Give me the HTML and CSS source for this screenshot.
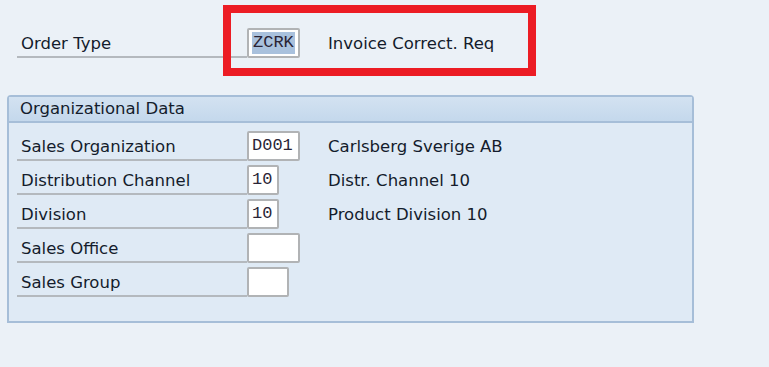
FILE: index.html
```html
<!DOCTYPE html>
<html lang="en">
<head>
	<meta charset="UTF-8">
	<title>Order Type</title>
	<link rel="stylesheet" href="styles.css">
</head>
<body>
	<div class="screen">
		<div class="head-row">
			<div class="field-row">
				<span class="lbl">Order Type</span>
				<span class="cell"><span class="inp inp-4"><span class="sel">ZCRK</span></span></span>
				<span class="desc">Invoice Correct. Req</span>
			</div>
			<div class="mark"></div>
		</div>

		<div class="group">
			<div class="group-title">Organizational Data</div>
			<div class="group-body">
				<div class="field-row">
					<span class="lbl">Sales Organization</span>
					<span class="cell"><span class="inp inp-4">D001</span></span>
					<span class="desc">Carlsberg Sverige AB</span>
				</div>
				<div class="field-row">
					<span class="lbl">Distribution Channel</span>
					<span class="cell"><span class="inp inp-2">10</span></span>
					<span class="desc">Distr. Channel 10</span>
				</div>
				<div class="field-row">
					<span class="lbl">Division</span>
					<span class="cell"><span class="inp inp-2">10</span></span>
					<span class="desc">Product Division 10</span>
				</div>
				<div class="field-row">
					<span class="lbl">Sales Office</span>
					<span class="cell"><span class="inp inp-4"></span></span>
				</div>
				<div class="field-row">
					<span class="lbl">Sales Group</span>
					<span class="cell"><span class="inp inp-3"></span></span>
				</div>
			</div>
		</div>
	</div>
</body>
</html>
```

FILE: styles.css
```css
html,body{
	margin:0;
	background: #ebf1f7;
	height: 100%;
}
body{
	font-family: "DejaVu Sans", sans-serif;
	font-size: 16.5px;
	color: #141c2c;
}
.screen{
	padding: 24px 0 0 7px;
}
.head-row{
	position: relative;
	padding-left: 10px;
}
.field-row{
	display: flex;
	align-items: flex-end;
	height: 34px;
}
.lbl{
	width: 226px;
	padding-left: 4px;
	border-bottom: 2px solid #b4b9be;
	padding-bottom: 1px;
	line-height: 22px;
}
.cell{
	display: flex;
	width: 81px;
}
.inp{
	box-sizing: border-box;
	height: 30px;
	background: #fff;
	border: 2px solid #b1b3b5;
	border-radius: 2px;
	font-family: "Liberation Mono", monospace;
	font-size: 17px;
	line-height: 26px;
	padding-left: 3px;
	color: #2a2436;
}
.inp-4{ width: 53px; }
.inp-3{ width: 42px; }
.inp-2{ width: 32px; }
.sel{
	background: #a9c1dd;
	padding: 1px 1px 2px;
}
.desc{
	padding-bottom: 3px;
	line-height: 22px;
}

/* red highlight drawn over the screenshot */
.mark{
	position: absolute;
	left: 216px;
	top: -19px;
	width: 313px;
	height: 71px;
	box-sizing: border-box;
	border: 8px solid #ec1c24;
}

.group{
	margin-top: 37px;
	width: 687px;
	box-sizing: border-box;
	border: 2px solid #a6bed8;
	border-radius: 4px 4px 0 0;
	background: #dfeaf5;
}
.group-title{
	height: 24px;
	line-height: 24px;
	padding-left: 11px;
	background: linear-gradient(#d3e2f1, #c4d8ec);
	border-bottom: 2px solid #a6bed8;
}
.group-body{
	padding: 4px 0 24px 8px;
}
```
